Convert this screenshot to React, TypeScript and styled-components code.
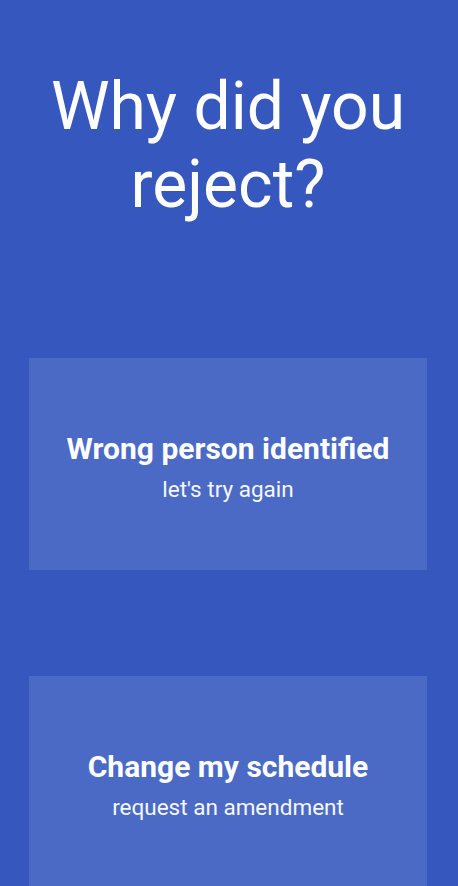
import React from 'react';
import styled, { createGlobalStyle } from 'styled-components';

const colors = {
  bg: '#3557be',
  card: '#4a6ac5',
  text: '#ffffff',
};

const GlobalStyle = createGlobalStyle`
  html, body {
    margin: 0;
    padding: 0;
    background: ${colors.bg};
  }
  body {
    font-family: Roboto, "Noto Sans", sans-serif;
    -webkit-font-smoothing: antialiased;
  }
`;

const Screen = styled.main`
  background-color: ${colors.bg};
  color: ${colors.text};
  box-sizing: border-box;
  display: flex;
  flex-direction: column;
  min-height: 886px;
  overflow: hidden;
  padding: 68px 31px 0 29px;
  width: 100%;
`;

const Title = styled.h1`
  font-size: 66px;
  font-weight: 400;
  line-height: 78px;
  margin: 0 0 134px;
  text-align: center;
`;

const OptionList = styled.div`
  display: flex;
  flex-direction: column;
  gap: 106px;
`;

const OptionCard = styled.button`
  align-items: center;
  background-color: ${colors.card};
  border: none;
  color: inherit;
  cursor: pointer;
  display: flex;
  flex-direction: column;
  font-family: inherit;
  height: 212px;
  justify-content: center;
  padding: 4px 0 0;
  width: 100%;
`;

const OptionTitle = styled.span`
  font-size: 30px;
  font-weight: 700;
  line-height: 35px;
`;

const OptionSubtitle = styled.span`
  font-size: 22.5px;
  font-weight: 400;
  line-height: 26px;
  margin-top: 10px;
  opacity: 0.95;
`;

const options = [
  { title: 'Wrong person identified', subtitle: "let's try again" },
  { title: 'Change my schedule', subtitle: 'request an amendment' },
];

const App: React.FC = () => {
  return (
    <>
      <GlobalStyle />
      <Screen>
        <Title>
          Why did you
          <br />
          reject?
        </Title>
        <OptionList>
          {options.map((o) => (
            <OptionCard key={o.title}>
              <OptionTitle>{o.title}</OptionTitle>
              <OptionSubtitle>{o.subtitle}</OptionSubtitle>
            </OptionCard>
          ))}
        </OptionList>
      </Screen>
    </>
  );
};

export default App;
